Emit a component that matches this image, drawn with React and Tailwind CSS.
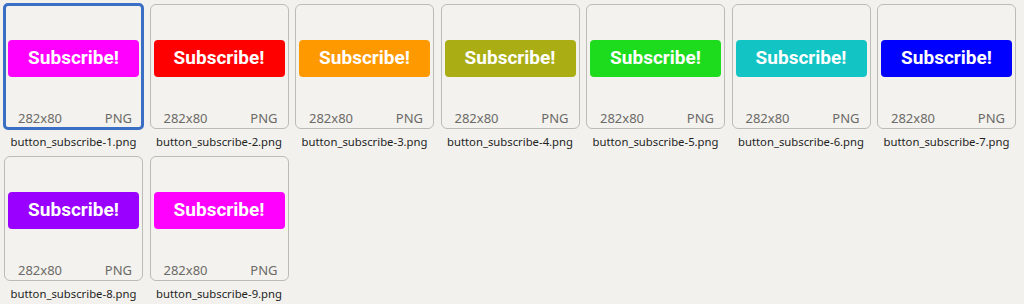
const files = [
  { n: 1, bg: 'bg-[#ff00ff]', selected: true },
  { n: 2, bg: 'bg-[#ff0000]' },
  { n: 3, bg: 'bg-[#ff9900]' },
  { n: 4, bg: 'bg-[#aaad14]' },
  { n: 5, bg: 'bg-[#1ddc1d]' },
  { n: 6, bg: 'bg-[#12c4c4]' },
  { n: 7, bg: 'bg-[#0000ff]' },
  { n: 8, bg: 'bg-[#9900ff]' },
  { n: 9, bg: 'bg-[#ff00ff]' },
];

function Tile({ file }) {
  return (
    <div className="flex w-[139px] flex-col">
      <div className="relative h-[125px] rounded-[6px] border border-[#bdbbb6] bg-[#f3f2ee]">
        {file.selected && (
          <div className="pointer-events-none absolute -inset-[2px] rounded-[5px] border-[3px] border-[#3b6fc6]" />
        )}
        <div className="flex h-[106px] items-center justify-center px-[3px]">
          <div
            className={`flex h-[37px] w-[131px] items-center justify-center rounded-[4px] ${file.bg} text-[19px] font-bold text-white`}
            style={{ fontFamily: 'Roboto, sans-serif' }}
          >
            Subscribe!
          </div>
        </div>
        <div className="flex items-center justify-between pl-[13px] pr-[10px] pt-[1px] text-[13px] leading-none text-[#6b6a67]">
          <span>282x80</span>
          <span>PNG</span>
        </div>
      </div>
      <div className="mt-[5px] text-center text-[11.3px] leading-[16px] text-[#1f1f1f]">
        button_subscribe-{file.n}.png
      </div>
    </div>
  );
}

export default function App() {
  return (
    <div
      className="h-[304px] w-[1024px] overflow-hidden bg-[#f2f1ed] pl-[4px] pt-[4px]"
      style={{ fontFamily: '"Noto Sans", "Open Sans", sans-serif' }}
    >
      <div className="flex flex-wrap gap-x-[6.5px] gap-y-[6px]">
        {files.map((f) => (
          <Tile key={f.n} file={f} />
        ))}
      </div>
    </div>
  );
}
